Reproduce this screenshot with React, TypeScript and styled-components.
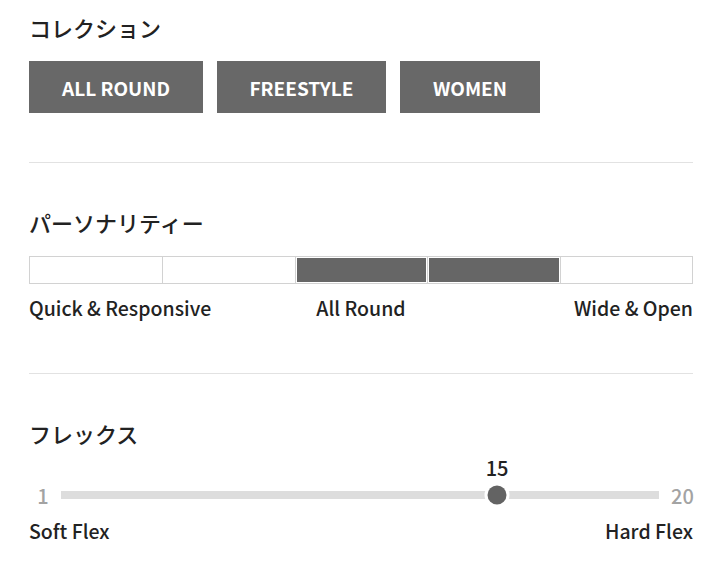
import React from "react";
import styled, { createGlobalStyle } from "styled-components";

const GlobalStyle = createGlobalStyle`
  body {
    margin: 0;
    background: #ffffff;
    font-family: "Noto Sans CJK JP", "Noto Sans", sans-serif;
    color: #222222;
  }
`;

const Page = styled.div`
  width: 664px;
  padding: 11px 17px 0 29px;
`;

const Section = styled.section`
  display: flex;
  flex-direction: column;
`;

const Divider = styled.hr`
  border: none;
  border-top: 1px solid #e2e2e2;
  margin: ${(p: { $top: number }) => p.$top}px 0 43px;
`;

const Title = styled.h2`
  margin: 0 0 18px;
  font-size: 22px;
  line-height: 32px;
  font-weight: 500;
  color: #222222;
`;

const ButtonRow = styled.div`
  display: flex;
  gap: 14px;
`;

const TagButton = styled.button<{ $width: number }>`
  width: ${(p) => p.$width}px;
  height: 52px;
  border: none;
  background: #686868;
  color: #ffffff;
  font-family: inherit;
  font-size: 19px;
  font-weight: 700;
  padding: 0;
  cursor: pointer;
`;

const SegmentBar = styled.div`
  display: grid;
  grid-template-columns: repeat(5, 1fr);
  height: 28px;
`;

const Segment = styled.div<{ $on: boolean }>`
  border: 1px solid #d2d2d2;
  border-right: none;
  padding: 1px;
  &:last-child {
    border-right: 1px solid #d2d2d2;
  }
  &::after {
    content: "";
    display: block;
    height: 100%;
    background: ${(p) => (p.$on ? "#666666" : "transparent")};
  }
`;

const LabelRow = styled.div<{ $top: number }>`
  display: grid;
  grid-template-columns: 1fr 1fr 1fr;
  margin-top: ${(p) => p.$top}px;
  font-size: 19.5px;
  line-height: 28px;
  font-weight: 500;
  color: #222222;
`;

const Label = styled.span<{ $align: "left" | "center" | "right" }>`
  text-align: ${(p) => p.$align};
  white-space: nowrap;
`;

const SliderWrap = styled.div`
  display: flex;
  flex-direction: column;
  margin-top: -13px;
`;

const ValueRow = styled.div`
  position: relative;
  height: 28px;
  margin: 0 34px 0 32px;
`;

const Value = styled.span`
  position: absolute;
  top: 0;
  transform: translateX(-50%);
  font-size: 20px;
  line-height: 28px;
  font-weight: 500;
  color: #222222;
`;

const SliderRow = styled.div`
  display: flex;
  align-items: center;
  height: 26px;
`;

const EndNum = styled.span<{ $w: number; $ml: number }>`
  width: ${(p) => p.$w}px;
  margin-left: ${(p) => p.$ml}px;
  text-align: center;
  font-size: 20px;
  font-weight: 500;
  color: #a3a3a3;
`;

const Track = styled.div`
  position: relative;
  flex: 1;
  height: 8px;
  background: #dddddd;
  margin-left: 4px;
`;

const Thumb = styled.div`
  position: absolute;
  top: 50%;
  width: 19px;
  height: 19px;
  border-radius: 50%;
  background: #636363;
  box-shadow: 0 0 0 3px #ffffff;
  transform: translate(-50%, -50%);
`;

const segments = [false, false, true, true, false];

const min = 1;
const max = 20;
const value = 15;
const trackWidth = 598;
const thumbSize = 19;

export default function App() {
  const ratio = (value - min) / (max - min);
  const pos = thumbSize / 2 + ratio * (trackWidth - thumbSize);

  return (
    <Page>
      <GlobalStyle />
      <Section>
        <Title>コレクション</Title>
        <ButtonRow>
          <TagButton $width={174}>ALL ROUND</TagButton>
          <TagButton $width={169}>FREESTYLE</TagButton>
          <TagButton $width={140}>WOMEN</TagButton>
        </ButtonRow>
      </Section>

      <Divider $top={49} />

      <Section>
        <Title>パーソナリティー</Title>
        <SegmentBar>
          {segments.map((on, i) => (
            <Segment key={i} $on={on} />
          ))}
        </SegmentBar>
        <LabelRow $top={10}>
          <Label $align="left">Quick &amp; Responsive</Label>
          <Label $align="center">All Round</Label>
          <Label $align="right">Wide &amp; Open</Label>
        </LabelRow>
      </Section>

      <Divider $top={51} />

      <Section>
        <Title>フレックス</Title>
        <SliderWrap>
          <ValueRow>
            <Value style={{ left: pos }}>{value}</Value>
          </ValueRow>
          <SliderRow>
            <EndNum $w={28} $ml={0}>
              {min}
            </EndNum>
            <Track>
              <Thumb style={{ left: pos }} />
            </Track>
            <EndNum $w={22} $ml={12}>
              {max}
            </EndNum>
          </SliderRow>
        </SliderWrap>
        <LabelRow $top={9}>
          <Label $align="left">Soft Flex</Label>
          <span />
          <Label $align="right">Hard Flex</Label>
        </LabelRow>
      </Section>
    </Page>
  );
}
